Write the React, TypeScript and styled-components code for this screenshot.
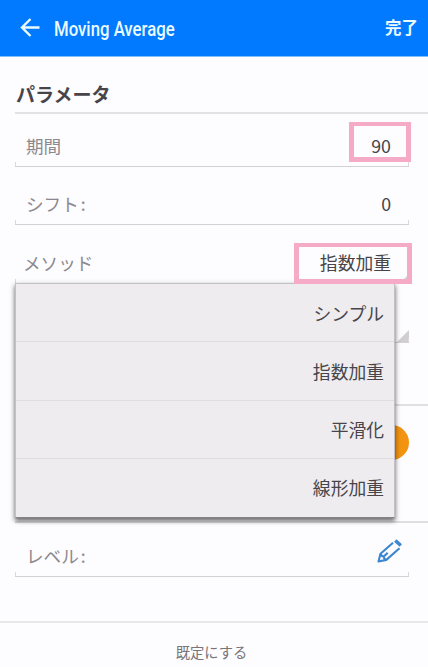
import React from 'react';
import styled, { createGlobalStyle } from 'styled-components';

const Global = createGlobalStyle`
  * { box-sizing: border-box; }
  body {
    margin: 0;
    background: #fdfcfe;
    font-family: "Noto Sans CJK JP", "Noto Sans", sans-serif;
    overflow: hidden;
  }
`;

const Screen = styled.div`
  width: 428px;
  height: 667px;
  display: flex;
  flex-direction: column;
  overflow: hidden;
  background: #fdfcfe;
`;

const Header = styled.header`
  flex: none;
  height: 57px;
  display: flex;
  align-items: center;
  padding: 0 10px 0 20px;
  background: #027aff;
  border-bottom: 1px solid #7fc0fb;
  color: #e9fbff;
`;

const BackIcon = styled.svg`
  width: 20px;
  height: 20px;
  margin-right: 14px;
`;

const Title = styled.h1`
  flex: 1;
  margin: 0;
  padding-top: 1px;
  font: 500 20px/24px Roboto, sans-serif;
  transform: scaleX(0.838);
  transform-origin: left;
  white-space: nowrap;
`;

const Done = styled.span`
  font-size: 16.5px;
  line-height: 24px;
  padding-bottom: 2px;
  font-weight: 700;
`;

const Body = styled.main`
  flex: 1;
  display: flex;
  flex-direction: column;
  padding-left: 15px;
`;

const SectionHead = styled.h2`
  flex: none;
  height: 57px;
  margin: 0;
  padding: 18px 0 0 1px;
  border-bottom: 2px solid #e3e1e6;
  font-size: 19px;
  line-height: 38px;
  font-weight: 700;
  color: #47454a;
`;

const Row = styled.div<{ $h: number; $inset?: number }>`
  position: relative;
  flex: none;
  height: ${(p) => p.$h}px;
  width: 394px;
  padding: 0 18px 0 ${(p) => p.$inset ?? 11}px;
  display: flex;
  justify-content: space-between;
  align-items: flex-end;
  border-bottom: 1px solid #d3d1d6;
  &::before, &::after {
    content: "";
    position: absolute;
    bottom: 0;
    width: 1px;
    height: 4px;
    background: #dbd9de;
  }
  &::before { left: 0; }
  &::after { right: 0; }
`;

const Label = styled.span`
  font-size: 17.6px;
  line-height: 40px;
  color: #8b898e;
`;

const Colon = styled.span`
  margin-left: 2px;
`;

const Value = styled.span<{ $lift?: number }>`
  font-size: 17.8px;
  line-height: 40px;
  padding-bottom: ${(p) => p.$lift ?? 0}px;
  color: #47454a;
`;

const Frame = styled.i<{ $w: number; $h: number; $right: number; $bottom: number }>`
  position: absolute;
  z-index: 3;
  width: ${(p) => p.$w}px;
  height: ${(p) => p.$h}px;
  right: ${(p) => p.$right}px;
  bottom: ${(p) => p.$bottom}px;
  border: 5px solid #f5abc8;
  border-top-width: 4px;
`;

const Corner = styled.i<{ $size: number }>`
  position: absolute;
  right: 0;
  bottom: 0;
  width: ${(p) => p.$size}px;
  height: ${(p) => p.$size}px;
  background: #d0ced2;
  clip-path: polygon(100% 0, 100% 100%, 0 100%);
`;

const Divider = styled.div<{ $gap: number }>`
  flex: none;
  height: ${(p) => p.$gap}px;
  border-bottom: 2px solid #e1dfe4;
`;

const ColorRow = styled.div`
  flex: none;
  height: 117px;
  padding: 19px 19px 0 0;
  display: flex;
  justify-content: flex-end;
  border-bottom: 2px solid #dfdde2;
`;

const Swatch = styled.span`
  width: 35px;
  height: 35px;
  border-radius: 50%;
  background: #f29410;
`;

const Menu = styled.ul`
  position: absolute;
  z-index: 2;
  left: 0;
  top: 100%;
  width: 380px;
  height: 235px;
  margin: 0;
  padding: 0 0 1px;
  list-style: none;
  display: flex;
  flex-direction: column;
  background: #eeecef;
  border: 1px solid #c2c0c4;
  border-bottom-color: #858387;
  box-shadow: 0 3px 4px rgba(0, 0, 0, 0.42), 0 2px 6px rgba(0, 0, 0, 0.28);
`;

const Option = styled.li`
  flex: 1;
  display: flex;
  align-items: center;
  justify-content: flex-end;
  padding-right: 10px;
  font-size: 17.8px;
  color: #47454a;
  & + & { border-top: 1px solid #dfdde1; }
`;

const PencilIcon = styled.svg`
  width: 26px;
  height: 26px;
  margin: 0 -11px 12px 0;
`;

const Footer = styled.footer`
  flex: none;
  height: 46px;
  border-top: 2px solid #e9e6ec;
  display: flex;
  justify-content: center;
  padding: 9px 5px 0 0;
  font-size: 14.3px;
  line-height: 40px;
  color: #77757a;
`;

const methods = ['シンプル', '指数加重', '平滑化', '線形加重'];

export default function App() {
  return (
    <>
      <Global />
      <Screen>
        <Header>
          <BackIcon viewBox="0 0 20 20" fill="none" stroke="currentColor" strokeWidth="2.4">
            <path d="M19.5 9.5H2M10.5 1 2 9.5l8.5 8.5" />
          </BackIcon>
          <Title>Moving Average</Title>
          <Done>完了</Done>
        </Header>
        <Body>
          <SectionHead>パラメータ</SectionHead>
          <Row $h={53}>
            <Label>期間</Label>
            <Value $lift={1}>90</Value>
            <Frame $w={62} $h={40} $right={-2} $bottom={4} />
          </Row>
          <Row $h={58}>
            <Label>シフト<Colon>:</Colon></Label>
            <Value $lift={1}>0</Value>
          </Row>
          <Row $h={59} $inset={8}>
            <Label>メソッド</Label>
            <Value $lift={1}>指数加重</Value>
            <Corner $size={9} />
            <Frame $w={118} $h={41} $right={-3} $bottom={-1} />
            <Menu>
              {methods.map((m) => (
                <Option key={m}>{m}</Option>
              ))}
            </Menu>
          </Row>
          <Row $h={59}>
            <Corner $size={12} />
          </Row>
          <Divider $gap={63} />
          <ColorRow>
            <Swatch />
          </ColorRow>
          <Row $h={54}>
            <Label>レベル<Colon>:</Colon></Label>
            <PencilIcon viewBox="0 0 26 26" fill="none" stroke="#3c87cf" strokeWidth="2.1" strokeLinejoin="round">
              <path d="M17 4.8 4.5 15.8 2.5 23.5l7.8-1.6L23.5 10.3" />
              <path d="M4.5 15.8c.4 2 1.5 2.6 3.2 2.7.1 1.9 1 3 2.6 3.4M7.7 18.5l4-3.6" />
              <path d="m19.3 2.5 5.5 5" strokeWidth="3.6" />
            </PencilIcon>
          </Row>
        </Body>
        <Footer>既定にする</Footer>
      </Screen>
    </>
  );
}
